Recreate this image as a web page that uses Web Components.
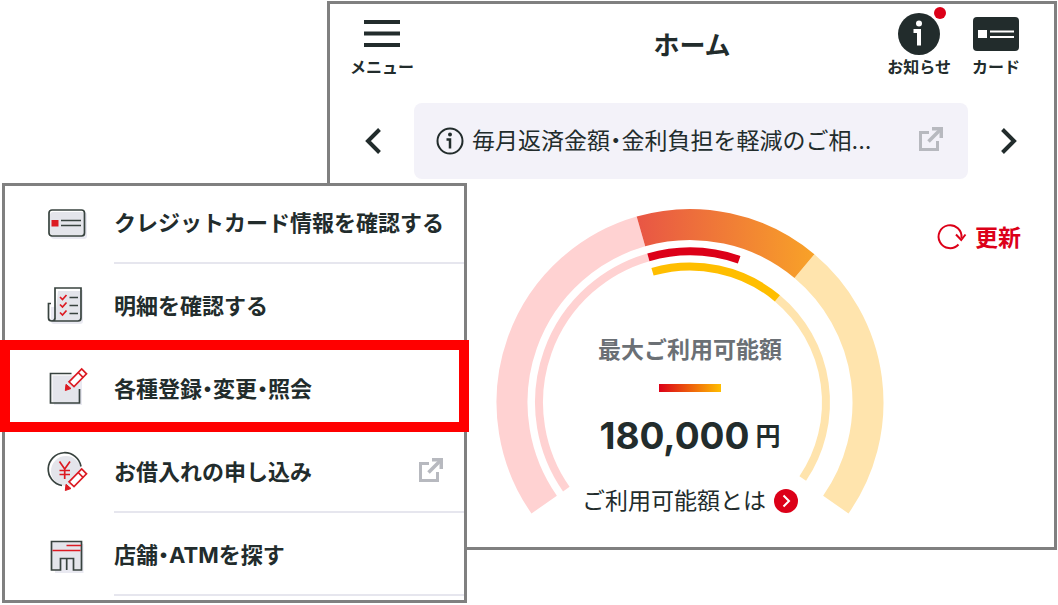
<!DOCTYPE html>
<html lang="ja">
<head>
<meta charset="utf-8">
<meta name="viewport" content="width=device-width, initial-scale=1">
<title>ホーム</title>
<style>
  body {
    margin: 0;
    background: #fff;
    color: #222c2c;
    font-family: Inter, "Noto Sans CJK JP", sans-serif;
    font-feature-settings: "halt";
  }
</style>
</head>
<body>
<app-stage>
  <home-panel slot="home"></home-panel>
  <menu-panel slot="menu">
    <menu-item icon="card">クレジットカード情報を確認する</menu-item>
    <menu-item icon="list">明細を確認する</menu-item>
    <menu-item icon="edit" marked>各種登録・変更・照会</menu-item>
    <menu-item icon="loan" external>お借入れの申し込み</menu-item>
    <menu-item icon="store">店舗・ATMを探す</menu-item>
  </menu-panel>
</app-stage>

<script>
const pencil = y => `<g transform="translate(0 ${y})" fill="none" stroke="#dc1a22" stroke-width="1.7">
  <path d="M22 12.800 34.700 0 39.500 4.800 27 17.500z" fill="#fff"/><path d="m31.200 3.500 4.800 4.800"/>
  <path d="M19 15.300 24 19.500 18.300 21.500z" fill="#dc1a22" stroke-width="1"/></g>`;

/* name: [width, height, markup] */
const ICONS = {
  hamburger: [36, 28, '<path d="M0 2h36M0 13.500h36M0 25h36" stroke="#222c2c" stroke-width="4"/>'],
  info: [42, 42, `<circle cx="21" cy="21" r="21" fill="#222c2c"/><circle cx="21" cy="10.500" r="3" fill="#fff"/>
    <path d="M15.500 18H21v14.500" fill="none" stroke="#fff" stroke-width="4"/>`],
  cardSolid: [46, 34, `<rect width="46" height="34" rx="4" fill="#222c2c"/><path d="M5 13h9v8H5z" fill="#fff"/>
    <path d="M17 14.500h24M17 20h24" stroke="#fff" stroke-width="2"/>`],
  infoLine: [28, 28, `<circle cx="14" cy="14" r="12.500" fill="none" stroke="#222c2c" stroke-width="2"/><circle cx="14" cy="7.500" r="2" fill="#222c2c"/>
    <path d="M10.500 12.500H14v9" fill="none" stroke="#222c2c" stroke-width="2.500"/>`],
  prev: [18, 28, '<path d="M15.500 2.500 4 14l11.500 11.500" fill="none" stroke="#222c2c" stroke-width="4"/>'],
  next: [18, 28, '<path d="M2.500 2.500 14 14 2.500 25.500" fill="none" stroke="#222c2c" stroke-width="4"/>'],
  external: [26, 30, `<path d="M11 6.500H2.500v17h17V15" fill="none" stroke="#b7b9bf" stroke-width="3"/>
    <path d="M10.500 15.500 22 4" stroke="#b7b9bf" stroke-width="3.500"/><path d="M14 1h11v11h-3.500V4.500H14z" fill="#b7b9bf"/>`],
  refresh: [30, 26, `<path d="M21.500 21.500A11.500 11.500 0 1 1 24.500 15" fill="none" stroke="#dc0018" stroke-width="2"/>
    <path d="M19 11.500 24.200 17 28.500 11.500" fill="none" stroke="#dc0018" stroke-width="2"/>`],
  go: [24, 24, `<circle cx="12" cy="12" r="12" fill="#dc0018"/><path d="m9.500 6.500 5.500 5.500-5.500 5.500" fill="none" stroke="#fff" stroke-width="2"/>`],
  card: [40, 40, `<rect x="4" y="9" width="36" height="27" rx="3" fill="#e9e9f1"/>
    <rect x="2" y="7" width="35.500" height="26" rx="3" fill="#fff"/><path d="M6 9h29q2 0 2 2v21H6q-3 0-3-3V12q0-3 3-3z" fill="#e4e5eb"/>
    <rect x="2" y="7" width="35.500" height="26" rx="3" fill="none" stroke="#38433f" stroke-width="1.700"/>
    <path d="M4.500 17h7v6.500h-7z" fill="#dc1a22"/><path d="M14 17.500h20M14 22.500h20" stroke="#38433f" stroke-width="1.700"/>`],
  list: [40, 40, `<path d="M4 21h5V4h27v31q0 3-3 3H7q-3 0-3-3z" fill="#e9e9f1"/><path d="M8 2h26v31q0 2-2 2H8z" fill="#fff"/>
    <path d="M11 5h23v27q0 3-3 3H5l3-3z" fill="#e4e5eb"/>
    <path d="M8 33V2h26v30q0 3-3 3H5q-3.500 0-3.500-3V17.500H4M8 32q0 3-3 3" fill="none" stroke="#38433f" stroke-width="1.700"/>
    <path d="m13 11 2.500 2.500L19.500 9M13 18.500l2.500 2.500 4-4.500M13 26.500l2.500 2.500 4-4.500" fill="none" stroke="#dc1a22" stroke-width="1.700"/>
    <path d="M22.500 11.500H31M22.500 19.500H31M22.500 27.500H31" stroke="#38433f" stroke-width="1.700"/>`],
  edit: [40, 40, `<path d="M7 8h28v28H7z" fill="#e9e9f1"/><path d="M5.500 6.500H32V33H5.500z" fill="#e4e5eb"/>
    <path d="M24.500 4.500H3.500V34h29V20" fill="none" stroke="#38433f" stroke-width="1.700"/>${pencil(0)}`],
  loan: [40, 40, `<circle cx="19" cy="19" r="15" fill="#e4e5eb"/>
    <path d="M15 33.500A16.500 16.500 0 1 1 34 14.500" fill="none" stroke="#38433f" stroke-width="1.700"/>
    <path d="m12.500 9.500 5.200 7.500L23 9.500M17.700 17v10M12.500 18.500h10.500M12.500 22.500h10.500" fill="none" stroke="#dc1a22" stroke-width="1.700"/>${pencil(17)}`],
  store: [40, 40, `<path d="M8 9h28.500v29H8z" fill="#e9e9f1"/>
    <path d="M5 7h29v28h-8V24H13v11H5z" fill="#e4e5eb"/>
    <path d="M4.500 6.500h30V35h-8V23.500h-13V35h-9zM19.700 23.500V35" fill="none" stroke="#38433f" stroke-width="1.700"/>
    <path d="M19.500 10.500H34M5.500 15.500h28" stroke="#dc1a22" stroke-width="1.700"/>`]
};

const define = (name, render) => customElements.define(name, class extends HTMLElement {
  constructor() { super(); this.attachShadow({ mode: 'open' }); }
  connectedCallback() { this.shadowRoot.innerHTML = render(this); }
});

define('ui-icon', el => {
  const [w, h, body] = ICONS[el.getAttribute('name')];
  return `<style>:host{display:block;flex:none}svg{display:block;overflow:visible}</style>
    <svg width="${w}" height="${h}" viewBox="0 0 ${w} ${h}" aria-hidden="true">${body}</svg>`;
});

define('app-stage', () => `<style>
  :host { display: grid; padding: 1px 1px 1px 2px;
    grid-template-columns: 325fr 140fr 590fr; grid-template-rows: 182px auto 53px; }
  ::slotted([slot=home]) { grid-area: 1 / 2 / 3 / 4; }
  ::slotted([slot=menu]) { grid-area: 2 / 1 / 4 / 3; }
</style><slot name="home"></slot><slot name="menu"></slot>`);

define('home-panel', () => `<style>
  :host { display: block; box-sizing: border-box; border: 3px solid #808080; background: #fff; }
</style><app-header></app-header><notice-banner></notice-banner><limit-gauge></limit-gauge>`);

define('tool-button', el => `<style>
  :host { display: block; }
  button { display: flex; flex-direction: column; align-items: center; padding: 0; border: 0;
    background: none; color: inherit; font: 700 16px/22px "Noto Sans CJK JP", sans-serif; cursor: pointer; }
  .art { position: relative; display: grid; place-items: center; height: 43px; }
  .art i { position: absolute; top: -5px; right: -6px; width: 12px; height: 12px; border-radius: 50%; background: #dc0018; }
</style><button type="button"><span class="art"><ui-icon name="${el.getAttribute('icon')}"></ui-icon>${el.hasAttribute('badge') ? '<i></i>' : ''}</span><slot></slot></button>`);

define('app-header', () => `<style>
  :host { display: grid; grid-template-columns: 1fr auto 1fr; height: 99px; padding: 8px 34px 0 20px; box-sizing: border-box; }
  h1 { margin: 16px 0 0 14px; font: 700 26px/32px "Noto Sans CJK JP", sans-serif; }
  .tools { display: flex; gap: 21px; justify-content: end; align-items: start; }
  .start { display: flex; align-items: start; }
</style>
<div class="start"><tool-button icon="hamburger">メニュー</tool-button></div>
<h1>ホーム</h1>
<div class="tools"><tool-button icon="info" badge>お知らせ</tool-button><tool-button icon="cardSolid">カード</tool-button></div>`);

define('notice-banner', () => `<style>
  :host { display: flex; align-items: center; justify-content: space-between; padding: 0 36px 0 34px; gap: 32px; }
  button { display: block; padding: 0; border: 0; background: none; cursor: pointer; }
  a { flex: 1; min-width: 0; display: flex; align-items: center; gap: 8px; height: 76px; padding: 0 24px 0 22px;
    box-sizing: border-box; border-radius: 8px; background: #f3f2f9; color: inherit; text-decoration: none; font-size: 23px; line-height: 32px; }
  span { flex: 1; min-width: 0; white-space: nowrap; overflow: hidden; }
</style>
<button type="button" aria-label="前へ"><ui-icon name="prev"></ui-icon></button>
<a href="#"><ui-icon name="infoLine"></ui-icon><span>毎月返済金額・金利負担を軽減のご相...</span><ui-icon name="external"></ui-icon></a>
<button type="button" aria-label="次へ"><ui-icon name="next"></ui-icon></button>`);

/* Angles are degrees clockwise from the top of the dial. */
const arc = (r, from, to, width, stroke) => {
  const p = a => `${(194 + r * Math.sin(a * Math.PI / 180)).toFixed(2)} ${(194.5 - r * Math.cos(a * Math.PI / 180)).toFixed(2)}`;
  return `<path d="M${p(from)}A${r} ${r} 0 0 1 ${p(to)}" fill="none" stroke="${stroke}" stroke-width="${width}"/>`;
};

define('limit-gauge', () => `<style>
  :host { display: grid; padding: 29px 33px 30px 29px; }
  .dial, .update { grid-area: 1 / 1; }
  .dial { display: grid; justify-self: center; }
  svg, .text { grid-area: 1 / 1; display: block; }
  .text { display: flex; flex-direction: column; align-items: center; padding-top: 126px; }
  p { margin: 0; }
  .label { font-weight: 700; font-size: 23px; line-height: 32px; color: #6b7075; }
  .bar { width: 62px; height: 8px; margin: 18px 0 20px; background: linear-gradient(90deg, #dc0018, #ffbe00); }
  .amount { display: flex; align-items: center; gap: 6px; font-weight: 700; font-size: 37px; line-height: 48px; }
  .amount small { font-size: 25px; }
  a { display: flex; align-items: center; gap: 8px; margin-top: 25px; color: inherit; text-decoration: none; font-size: 23px; line-height: 32px; }
  .update { justify-self: end; align-self: start; display: flex; align-items: center; gap: 8px; margin-top: 12px; padding: 0; border: 0;
    background: none; color: #dc0018; font: 700 23px/32px "Noto Sans CJK JP", sans-serif; cursor: pointer; }
</style>
<div class="dial">
  <svg width="388" height="306" viewBox="0 0 388 306" aria-hidden="true">
    <defs><linearGradient id="heat" gradientUnits="userSpaceOnUse" x1="140" y1="0" x2="318" y2="0">
      <stop stop-color="#e85545"/><stop offset="1" stop-color="#f8a228"/></linearGradient></defs>
    ${arc(178, -125, -16, 31, '#ffd2d2')}${arc(178, 40, 125, 31, '#ffe4ad')}${arc(178, -16, 40, 31, 'url(#heat)')}
    ${arc(151, -125, -16, 8, '#ffd2d2')}${arc(151, -16, 19, 8, '#dc0018')}
    ${arc(136, 40, 124, 8, '#ffe4ad')}${arc(136, -16, 40, 8, '#ffbe00')}
  </svg>
  <div class="text">
    <p class="label">最大ご利用可能額</p>
    <div class="bar"></div>
    <p class="amount"><span>180,000</span><small>円</small></p>
    <a href="#">ご利用可能額とは<ui-icon name="go"></ui-icon></a>
  </div>
</div>
<button class="update" type="button"><ui-icon name="refresh"></ui-icon>更新</button>`);

define('menu-panel', () => `<style>
  :host { display: block; box-sizing: border-box; border: 3px solid #808080; background: #fff; }
  nav { margin-top: -5px; }
</style><nav><slot></slot></nav>`);

define('menu-item', el => `<style>
  :host { display: block; position: relative; }
  a { display: flex; gap: 27px; align-items: center; height: 83px; padding-left: 42px; color: inherit; text-decoration: none;
    font-weight: 700; font-size: 22px; line-height: 32px; white-space: nowrap; }
  .body { flex: 1; align-self: stretch; display: flex; align-items: center; justify-content: space-between;
    box-sizing: border-box; padding: 2px 20px 0 0; border-bottom: 2px solid #e6e6ee; }
  :host([marked])::after { content: ""; position: absolute; inset: -7px -5px -2px; border: 10px solid #f00; z-index: 1; pointer-events: none; }
</style><a href="#"><ui-icon name="${el.getAttribute('icon')}"></ui-icon><span class="body"><span><slot></slot></span>${el.hasAttribute('external') ? '<ui-icon name="external"></ui-icon>' : ''}</span></a>`);
</script>
</body>
</html>
